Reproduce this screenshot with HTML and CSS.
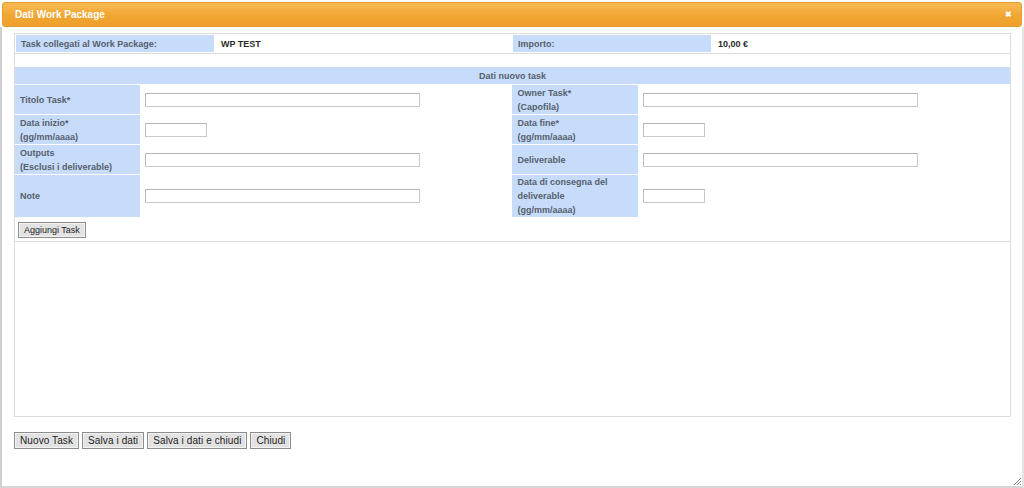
FILE: index.html
```html
<!DOCTYPE html>
<html lang="it">
<head>
<meta charset="utf-8">
<title>Dati Work Package</title>
<link rel="stylesheet" href="styles.css">
</head>
<body>
<div class="dialog">
  <div class="titlebar">
    <span class="title">Dati Work Package</span>
    <span class="close">&#x2716;</span>
  </div>
  <div class="content">
    <div class="panel">
      <table class="info">
        <colgroup><col class="w20"><col class="w30"><col class="w20"><col class="w30"></colgroup>
        <tr>
          <td class="lbl">Task collegati al Work Package:</td>
          <td class="val">WP TEST</td>
          <td class="lbl">Importo:</td>
          <td class="val">10,00 €</td>
        </tr>
      </table>
      <table class="form">
        <colgroup><col class="cl"><col class="cf"><col class="cl"><col class="cf"></colgroup>
        <tr><th colspan="4" class="head">Dati nuovo task</th></tr>
        <tr>
          <td class="lbl">Titolo Task*</td>
          <td class="fld"><input type="text" class="wide"></td>
          <td class="lbl">Owner Task*<br>(Capofila)</td>
          <td class="fld"><input type="text" class="wide"></td>
        </tr>
        <tr>
          <td class="lbl">Data inizio*<br>(gg/mm/aaaa)</td>
          <td class="fld"><input type="text" class="date"></td>
          <td class="lbl">Data fine*<br>(gg/mm/aaaa)</td>
          <td class="fld"><input type="text" class="date"></td>
        </tr>
        <tr>
          <td class="lbl">Outputs<br>(Esclusi i deliverable)</td>
          <td class="fld"><input type="text" class="wide"></td>
          <td class="lbl">Deliverable</td>
          <td class="fld"><input type="text" class="wide"></td>
        </tr>
        <tr>
          <td class="lbl">Note</td>
          <td class="fld"><input type="text" class="wide"></td>
          <td class="lbl">Data di consegna del<br>deliverable<br>(gg/mm/aaaa)</td>
          <td class="fld"><input type="text" class="date"></td>
        </tr>
      </table>
      <div class="addrow"><button class="btn small">Aggiungi Task</button></div>
      <div class="list"></div>
    </div>
    <div class="actions">
      <button class="btn">Nuovo Task</button>
      <button class="btn">Salva i dati</button>
      <button class="btn">Salva i dati e chiudi</button>
      <button class="btn">Chiudi</button>
    </div>
    <svg class="grip" width="10" height="10" viewBox="0 0 10 10">
      <path d="M9 2 L2 9 M9 5 L5 9 M9 8 L8 9" stroke="#888" stroke-width="1"/>
    </svg>
  </div>
</div>
</body>
</html>
```
FILE: styles.css
```css
* { box-sizing: border-box; }
html, body { margin: 0; padding: 0; background: #fff; }
body {
  font-family: "Liberation Sans", Arial, sans-serif;
  width: 1024px;
  height: 488px;
  overflow: hidden;
}
.dialog {
  height: 488px;
  padding-top: 2px;
  display: flex;
  flex-direction: column;
}
.titlebar {
  margin: 0 2px 0 2px;
  height: 25px;
  border: 1px solid #e49d2f;
  border-radius: 3px;
  background: linear-gradient(#f7bb52, #f1a633 55%, #ef9f2a);
  display: flex;
  align-items: center;
  justify-content: space-between;
  padding: 0 9px 0 12px;
  color: #fff;
}
.title {
  font-size: 10px;
  font-weight: bold;
}
.close {
  font-size: 8px;
  font-weight: bold;
  color: #fff;
}
.content {
  position: relative;
  flex: 1;
  border-left: 2px solid #cfcfcf;
  border-right: 2px solid #e4e4e4;
  border-bottom: 2px solid #d6d6d6;
  padding: 6px 11px 0 12px;
}
.panel {
  border: 1px solid #dcdcdc;
  height: 384px;
  display: flex;
  flex-direction: column;
}
table {
  border-collapse: separate;
  width: 100%;
  table-layout: fixed;
}
.w20 { width: 20%; }
.w30 { width: 30%; }
.cl { width: 12.6%; }
.cf { width: 37.4%; }
.info {
  border-spacing: 1px;
  border-bottom: 1px solid #dcdcdc;
}
.info td {
  height: 17px;
  padding: 0 0 0 5px;
  font-size: 9px;
  font-weight: bold;
}
.lbl {
  background: #c7dbfa;
  color: #56606d;
  font-size: 9px;
  font-weight: bold;
  line-height: 14px;
  padding: 0 0 0 5px;
  vertical-align: middle;
}
.info .val {
  color: #2a2a2a;
  padding-left: 6px;
}
.form {
  margin-top: 12px;
  border-spacing: 0 1px;
}
.form .head {
  background: #c7dbfa;
  color: #56606d;
  font-size: 9px;
  font-weight: bold;
  height: 17px;
  text-align: center;
  padding: 0;
}
.form td.lbl { height: 29px; }
.form td.fld { padding: 0 0 0 5px; vertical-align: middle; }
input[type=text] {
  display: block;
  height: 14px;
  border: 1px solid #c9c9c9;
  border-top-color: #b5b5b5;
  border-left-color: #bdbdbd;
  background: #fff;
  margin: 0;
  padding: 0;
}
.wide { width: 275px; }
.date { width: 62px; }
.addrow {
  padding: 4px 3px 3px 3px;
  border-bottom: 1px solid #dcdcdc;
}
.btn {
  font-family: "Liberation Sans", Arial, sans-serif;
  font-size: 10px;
  letter-spacing: 0.1px;
  color: #222;
  background: #e2e2e2;
  border: 1px solid #8d8d8d;
  box-shadow: inset 0 0 0 1px #f2f2f2;
  height: 17px;
  padding: 0 5px;
  margin: 0;
  line-height: 15px;
}
.btn.small {
  display: block;
  font-size: 9px;
  letter-spacing: 0;
  height: 16px;
  padding: 0 5px;
}
.list { flex: 1; }
.actions {
  margin-top: 15px;
  display: flex;
  gap: 3px;
}
.grip {
  position: absolute;
  right: 0;
  bottom: 0;
}
```
